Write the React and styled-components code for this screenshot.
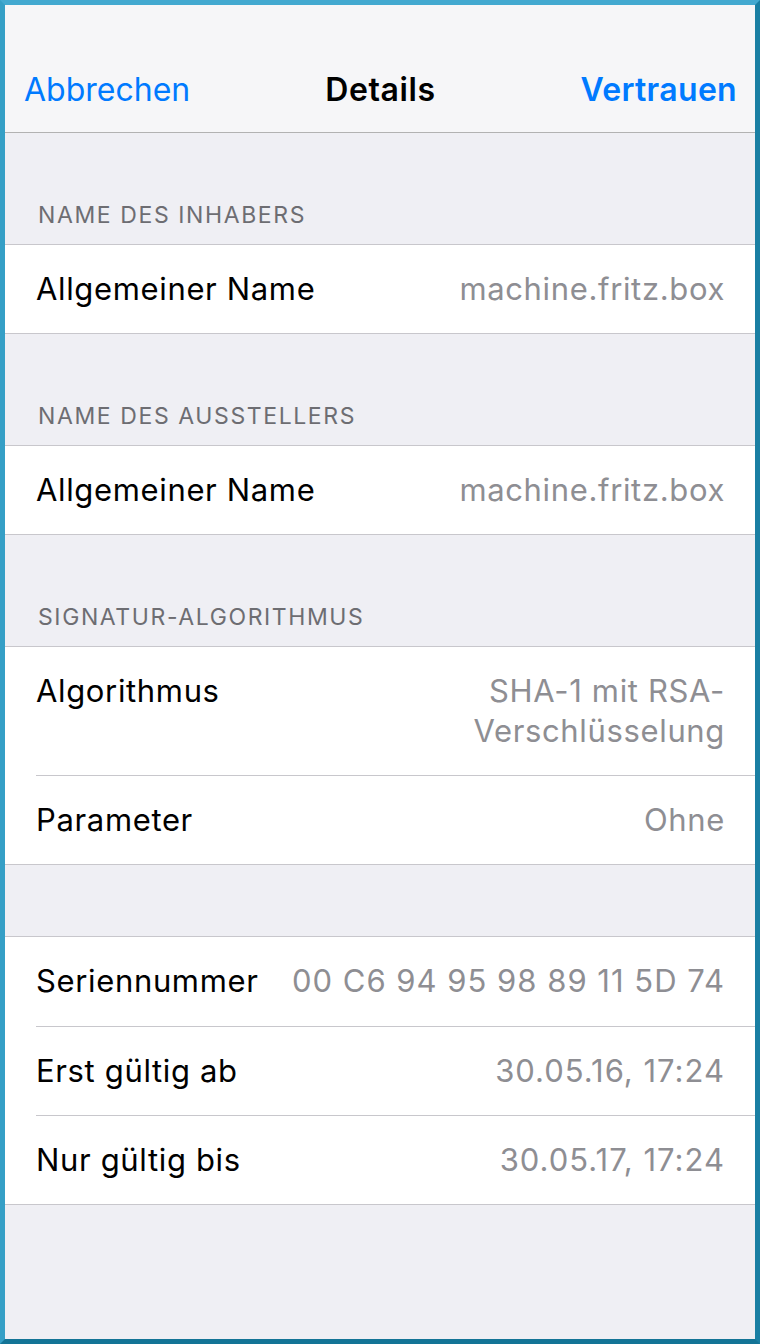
import styled, { createGlobalStyle } from "styled-components";

const GlobalStyle = createGlobalStyle`
  html, body {
    margin: 0;
    padding: 0;
    background: #efeff4;
  }
  * { box-sizing: border-box; }
`;

const Frame = styled.div`
  width: 760px;
  height: 1344px;
  border: 5px solid;
  border-color: #43a9d0 #1a7fa3 #137496 #359fc6;
  background: #efeff4;
  font-family: Inter, "Liberation Sans", sans-serif;
  display: flex;
  flex-direction: column;
  overflow: hidden;
`;

const NavBar = styled.header`
  height: 128px;
  flex-shrink: 0;
  background: #f6f6f8;
  border-bottom: 1px solid #b2b2b2;
  display: grid;
  grid-template-columns: 1fr auto 1fr;
  align-items: end;
  padding: 0 18px 22px 19px;
`;

const NavButton = styled.button`
  border: 0;
  background: none;
  padding: 0;
  font: inherit;
  font-size: 32px;
  line-height: 40px;
  color: #007aff;
  font-weight: ${(p) => (p.$strong ? 600 : 400)};
  justify-self: ${(p) => (p.$right ? "end" : "start")};
  letter-spacing: ${(p) => (p.$strong ? "0.3px" : "0")};
`;

const NavTitle = styled.h1`
  margin: 0;
  font-size: 32px;
  line-height: 40px;
  font-weight: 600;
  color: #000;
  letter-spacing: 0.6px;
`;

const SectionHeader = styled.div`
  height: 111px;
  padding: 69px 0 0 33px;
  font-size: 23px;
  line-height: 26px;
  color: #6d6d72;
  letter-spacing: 1.6px;
  text-transform: uppercase;
`;

const Spacer = styled.div`
  height: 71px;
`;

const Group = styled.section`
  background: #fff;
  border-top: 1px solid #c8c7cc;
  border-bottom: 1px solid #c8c7cc;
  padding-left: 31px;
`;

const Row = styled.div`
  display: flex;
  justify-content: space-between;
  align-items: flex-start;
  gap: 30px;
  padding: 24px 30px 24px 0;
  min-height: ${(p) => (p.$tall ? "89px" : "88px")};
  font-size: 31px;
  line-height: 40px;
  letter-spacing: 0.65px;
  & + & {
    border-top: 1px solid #c8c7cc;
  }
`;

const Label = styled.span`
  color: #000;
  white-space: nowrap;
`;

const Value = styled.span`
  color: #8e8e93;
  text-align: right;
  white-space: ${(p) => (p.$wrap ? "normal" : "nowrap")};
  max-width: ${(p) => (p.$wrap ? "280px" : "none")};
  letter-spacing: ${(p) => (p.$mono ? "1px" : "inherit")};
`;

const sections = [
  {
    title: "Name des Inhabers",
    rows: [{ label: "Allgemeiner Name", value: "machine.fritz.box" }],
  },
  {
    title: "Name des Ausstellers",
    rows: [{ label: "Allgemeiner Name", value: "machine.fritz.box" }],
  },
  {
    title: "Signatur-Algorithmus",
    rows: [
      { label: "Algorithmus", value: "SHA-1 mit RSA-Verschlüsselung", wrap: true },
      { label: "Parameter", value: "Ohne", tall: true },
    ],
  },
  {
    title: null,
    rows: [
      { label: "Seriennummer", value: "00 C6 94 95 98 89 11 5D 74", mono: true, tall: true },
      { label: "Erst gültig ab", value: "30.05.16, 17:24", mono: true, tall: true },
      { label: "Nur gültig bis", value: "30.05.17, 17:24", mono: true, tall: true },
    ],
  },
];

export default function App() {
  return (
    <>
      <GlobalStyle />
      <Frame>
        <NavBar>
          <NavButton>Abbrechen</NavButton>
          <NavTitle>Details</NavTitle>
          <NavButton $strong $right>Vertrauen</NavButton>
        </NavBar>
        {sections.map((s, i) => (
          <div key={i}>
            {s.title ? <SectionHeader>{s.title}</SectionHeader> : <Spacer />}
            <Group>
              {s.rows.map((r) => (
                <Row key={r.label} $tall={r.tall}>
                  <Label>{r.label}</Label>
                  <Value $wrap={r.wrap} $mono={r.mono}>{r.value}</Value>
                </Row>
              ))}
            </Group>
          </div>
        ))}
      </Frame>
    </>
  );
}
